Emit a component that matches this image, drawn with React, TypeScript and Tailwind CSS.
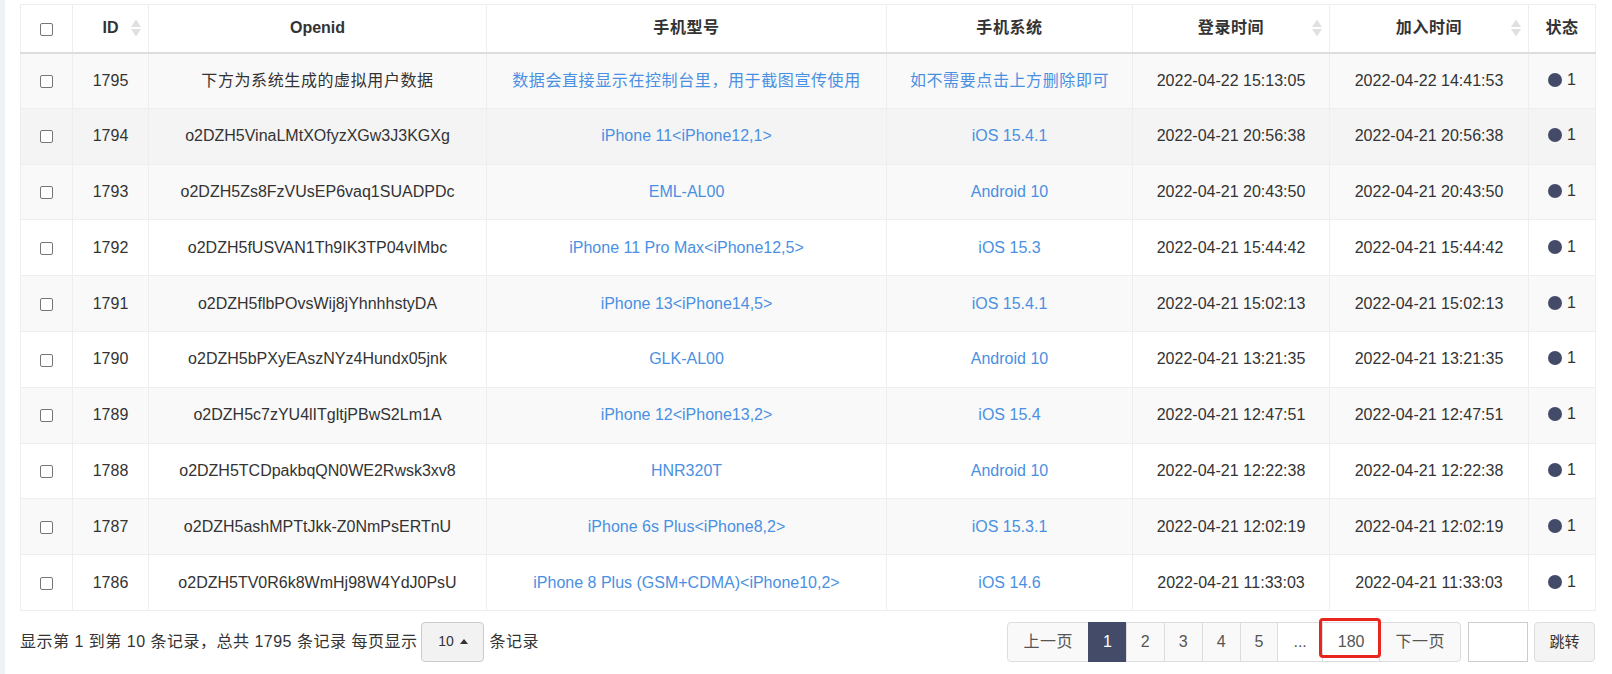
import React from "react";

type Row = {
  id: number;
  openid: string;
  model: string;
  os: string;
  login: string;
  join: string;
  cjk?: boolean;
};

const rows: Row[] = [
  { id: 1795, openid: "下方为系统生成的虚拟用户数据", model: "数据会直接显示在控制台里，用于截图宣传使用", os: "如不需要点击上方删除即可", login: "2022-04-22 15:13:05", join: "2022-04-22 14:41:53", cjk: true },
  { id: 1794, openid: "o2DZH5VinaLMtXOfyzXGw3J3KGXg", model: "iPhone 11<iPhone12,1>", os: "iOS 15.4.1", login: "2022-04-21 20:56:38", join: "2022-04-21 20:56:38" },
  { id: 1793, openid: "o2DZH5Zs8FzVUsEP6vaq1SUADPDc", model: "EML-AL00", os: "Android 10", login: "2022-04-21 20:43:50", join: "2022-04-21 20:43:50" },
  { id: 1792, openid: "o2DZH5fUSVAN1Th9IK3TP04vIMbc", model: "iPhone 11 Pro Max<iPhone12,5>", os: "iOS 15.3", login: "2022-04-21 15:44:42", join: "2022-04-21 15:44:42" },
  { id: 1791, openid: "o2DZH5flbPOvsWij8jYhnhhstyDA", model: "iPhone 13<iPhone14,5>", os: "iOS 15.4.1", login: "2022-04-21 15:02:13", join: "2022-04-21 15:02:13" },
  { id: 1790, openid: "o2DZH5bPXyEAszNYz4Hundx05jnk", model: "GLK-AL00", os: "Android 10", login: "2022-04-21 13:21:35", join: "2022-04-21 13:21:35" },
  { id: 1789, openid: "o2DZH5c7zYU4lITgltjPBwS2Lm1A", model: "iPhone 12<iPhone13,2>", os: "iOS 15.4", login: "2022-04-21 12:47:51", join: "2022-04-21 12:47:51" },
  { id: 1788, openid: "o2DZH5TCDpakbqQN0WE2Rwsk3xv8", model: "HNR320T", os: "Android 10", login: "2022-04-21 12:22:38", join: "2022-04-21 12:22:38" },
  { id: 1787, openid: "o2DZH5ashMPTtJkk-Z0NmPsERTnU", model: "iPhone 6s Plus<iPhone8,2>", os: "iOS 15.3.1", login: "2022-04-21 12:02:19", join: "2022-04-21 12:02:19" },
  { id: 1786, openid: "o2DZH5TV0R6k8WmHj98W4YdJ0PsU", model: "iPhone 8 Plus (GSM+CDMA)<iPhone10,2>", os: "iOS 14.6", login: "2022-04-21 11:33:03", join: "2022-04-21 11:33:03" },
];

function Checkbox() {
  return <span className="inline-block w-[13px] h-[13px] border border-[#767676] rounded-[2px] bg-white align-middle" />;
}

function SortIcon() {
  return (
    <svg className="absolute right-[7px] top-1/2 -translate-y-1/2" width="10" height="17" viewBox="0 0 10 17">
      <path d="M5 0 L10 7.5 L0 7.5 Z" fill="#e0e0e0" />
      <path d="M0 9.5 L10 9.5 L5 17 Z" fill="#e0e0e0" />
    </svg>
  );
}

function rowBg(i: number) {
  if (i === 1) return "bg-[#f4f4f4]";
  return i % 2 === 0 ? "bg-[#f9f9f9]" : "bg-white";
}

export default function App() {
  const th = "relative h-[48px] p-0 border-x border-t border-[#eeeeee] border-b-2 border-b-[#dddddd] text-center align-middle font-bold text-[16px] text-[#333]";
  const td = "h-[55.8px] p-0 border border-[#eeeeee] text-center align-middle text-[16px]";
  const cj = "tracking-[0.6px]";
  const pg = "h-full flex items-center border -ml-px";
  return (
    <div className="w-[1612px] h-[674px] bg-white flex overflow-hidden" style={{ fontFamily: '"Liberation Sans", Arial, "Noto Sans CJK SC", sans-serif' }}>
      <div className="w-[5px] shrink-0 bg-[#eef2f7]" />
      <div className="flex-1 pl-[15px] pt-[4px]">
        <table className="table-fixed border-collapse w-[1575px] text-[#333]">
          <colgroup>
            <col className="w-[52px]" />
            <col className="w-[76px]" />
            <col className="w-[338px]" />
            <col className="w-[400px]" />
            <col className="w-[246px]" />
            <col className="w-[197px]" />
            <col className="w-[199px]" />
            <col className="w-[67px]" />
          </colgroup>
          <thead>
            <tr className="bg-white">
              <th className={th}><Checkbox /></th>
              <th className={th}>ID<SortIcon /></th>
              <th className={th}>Openid</th>
              <th className={`${th} ${cj}`}>手机型号</th>
              <th className={`${th} ${cj}`}>手机系统</th>
              <th className={`${th} ${cj}`}>登录时间<SortIcon /></th>
              <th className={`${th} ${cj}`}>加入时间<SortIcon /></th>
              <th className={`${th} ${cj}`}>状态</th>
            </tr>
          </thead>
          <tbody>
            {rows.map((r, i) => (
              <tr key={r.id} className={rowBg(i)}>
                <td className={td}><Checkbox /></td>
                <td className={td}>{r.id}</td>
                <td className={`${td} ${r.cjk ? cj : ""}`}>{r.openid}</td>
                <td className={`${td} text-[#4a90e2] ${r.cjk ? cj : ""}`}>{r.model}</td>
                <td className={`${td} text-[#4a90e2] ${r.cjk ? cj : ""}`}>{r.os}</td>
                <td className={td}>{r.login}</td>
                <td className={td}>{r.join}</td>
                <td className={td}>
                  <span className="inline-flex items-center gap-[5px]">
                    <span className="inline-block w-[14px] h-[14px] rounded-full bg-[#444b68]" />
                    <span>1</span>
                  </span>
                </td>
              </tr>
            ))}
          </tbody>
        </table>

        <div className="w-[1575px] mt-[11px] flex items-center justify-between text-[16px] text-[#333]">
          <div className="flex items-center">
            <span className="tracking-[0.5px]">显示第 1 到第 10 条记录，总共 1795 条记录 每页显示</span>
            <span className="ml-[4px] w-[63px] h-[40px] flex items-center justify-center gap-[6px] border border-[#cccccc] rounded-[4px] bg-[#f2f2f2] text-[14px] text-[#333]">
              10
              <svg width="8" height="5" viewBox="0 0 8 5"><path d="M4 0 L8 5 L0 5 Z" fill="#333" /></svg>
            </span>
            <span className="ml-[5px] tracking-[0.5px]">条记录</span>
          </div>
          <div className="flex items-center">
            <div className="flex h-[40px] text-[#555]">
              <span className="h-full px-[15px] flex items-center bg-[#f9f9f9] border border-[#dddddd] rounded-l-[4px] tracking-[0.5px]">上一页</span>
              <span className={`${pg} px-[14px] bg-[#444b68] border-[#444b68] text-white`}>1</span>
              <span className={`${pg} px-[14px] bg-[#f9f9f9] border-[#dddddd]`}>2</span>
              <span className={`${pg} px-[14px] bg-[#f9f9f9] border-[#dddddd]`}>3</span>
              <span className={`${pg} px-[14px] bg-[#f9f9f9] border-[#dddddd]`}>4</span>
              <span className={`${pg} px-[14px] bg-[#f9f9f9] border-[#dddddd]`}>5</span>
              <span className={`${pg} px-[15px] bg-white border-[#dddddd]`}>...</span>
              <span className={`relative ${pg} px-[15px] bg-white border-[#dddddd]`}>
                180
                <span className="absolute left-[-4px] right-[-2px] top-[-5px] bottom-[3px] border-[3px] border-[#e8261e] rounded-[4px]" />
              </span>
              <span className={`${pg} px-[15px] bg-[#f9f9f9] border-[#dddddd] rounded-r-[4px] tracking-[0.5px]`}>下一页</span>
            </div>
            <span className="ml-[7px] w-[60px] h-[40px] border border-[#cccccc] bg-white" />
            <span className="ml-[6px] w-[61px] h-[40px] flex items-center justify-center border border-[#dddddd] rounded-[4px] bg-[#f4f4f4] text-[15px] text-[#333]">跳转</span>
          </div>
        </div>
      </div>
    </div>
  );
}
